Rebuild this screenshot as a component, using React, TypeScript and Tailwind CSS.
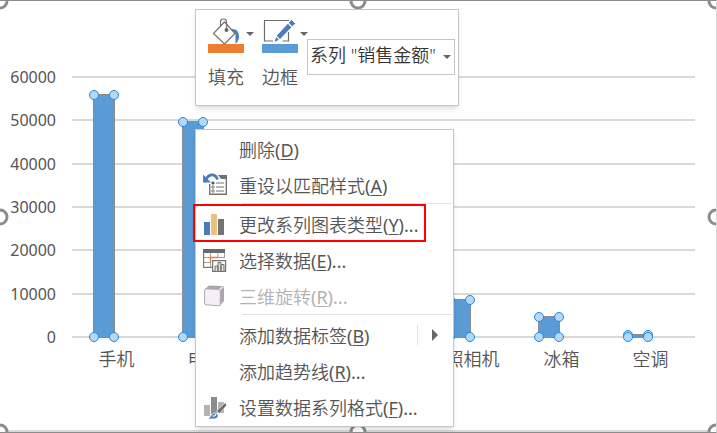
/**
 * App.tsx
 *
 * Sales column chart with its data series selected: the mini toolbar
 * and the series context menu lie open over the plot.
 */

import type { ReactNode } from 'react'

interface Category {
  readonly name: string
  readonly value: number
}

interface MenuEntry {
  readonly label: string
  readonly accessKey: string
  readonly suffix?: string
  readonly icon?: ReactNode
  readonly disabled?: boolean
  readonly highlighted?: boolean
  readonly submenu?: boolean
  readonly separated?: boolean
}

const AXIS_MAX = 60000

const TICKS = [60000, 50000, 40000, 30000, 20000, 10000, 0]

const CATEGORIES: Category[] = [
  { name: '手机', value: 56000 },
  { name: '电脑', value: 50000 },
  { name: '', value: 0 },
  { name: '', value: 0 },
  { name: '照相机', value: 9000 },
  { name: '冰箱', value: 5000 },
  { name: '空调', value: 1000 },
]

const FRAME_HANDLES = [
  'left-0 top-0',
  'left-1/2 top-0',
  'left-full top-0',
  'left-0 top-1/2',
  'left-full top-1/2',
  'left-0 top-full',
  'left-1/2 top-full',
  'left-full top-full',
]

const BAR_HANDLES = ['left-0 top-0', 'left-full top-0', 'left-0 top-full', 'left-full top-full']

function ResetIcon() {
  return (
    <svg viewBox="0 0 24 24" className="h-6 w-6" fill="none">
      <path d="M15 2h9v4h-6z" fill="#737373" />
      <path d="M23.300 4v17.300H6.700V11" stroke="#737373" strokeWidth="1.400" />
      <path d="M13 10h8M13 14h8M13 18h8" stroke="#737373" strokeWidth="1.200" />
      <circle cx="10" cy="10" r="1.600" fill="#555" />
      <circle cx="10" cy="14" r="1.200" stroke="#737373" />
      <circle cx="10" cy="18" r="1.200" stroke="#737373" />
      <path d="M14.500 6.500C12 0 6 1 3 6" stroke="#4a7ebb" strokeWidth="2.800" />
      <path d="M0 1.500V9.500h8z" fill="#4a7ebb" />
    </svg>
  )
}

function ChartTypeIcon() {
  return (
    <svg viewBox="0 0 24 24" className="h-6 w-6">
      <path d="M1 10h6v13H1z" fill="#4a7db3" />
      <path d="M8 2h6v21H8z" fill="#e9c281" />
      <path d="M15 7h6v16h-6z" fill="#737373" />
    </svg>
  )
}

function SelectDataIcon() {
  return (
    <svg viewBox="0 0 24 24" className="h-6 w-6" fill="none">
      <path d="M.600 4v15.400H9M7.500 5v14M15 5v4M0 9.500h22M0 14.500h8M21.500 5v5" stroke="#a0a0a0" />
      <path d="M.600 4v15.400H9" stroke="#737373" />
      <path d="M0 1h22v4H0z" fill="#6b6b6b" />
      <path d="M7.500 14.500v-5H15" stroke="#ed7d31" strokeWidth="1.500" />
      <path d="M9.600 12.600h13v10.800h-13z" fill="#fff" stroke="#737373" strokeWidth="1.200" />
      <path d="M12 23v-5h3v5M15 23v-8.500h3V23M18 23v-6.500h3V23" stroke="#737373" fill="#ddd" />
    </svg>
  )
}

function RotateIcon() {
  return (
    <svg viewBox="0 0 24 24" className="h-6 w-6">
      <path d="M2 5l4-3.500 13 .500q2 0 2 2v13l-4 4.500-1-16z" fill="#a9a9a9" />
      <path
        d="M3 4.800l13 .700q1.300 0 1.300 1.500v13.500q0 1.300-1.500 1.200L3 20.800q-1.400-.200-1.400-1.500V6.300Q1.600 4.800 3 4.800z"
        fill="#f3eff5"
        stroke="#aaa"
      />
      <path d="M16.500 6l3-3" stroke="#eee" strokeWidth="1.500" />
    </svg>
  )
}

function FormatSeriesIcon() {
  return (
    <svg viewBox="0 0 24 24" className="h-6 w-6">
      <path d="M1 10h6v11H1zM15 7h6v11h-6z" fill="#b3b3b3" />
      <path d="M8 2h6v17H8z" fill="#8c8c8c" />
      <path d="M22.500 7.500l1 3-7 8-3-2.500z" fill="#6b6b6b" stroke="#fff" strokeWidth=".600" />
      <path d="M4.500 24c3-1 3-6 7.500-6 4 0 4.500 6-1 6z" fill="#4a7db3" stroke="#fff" strokeWidth=".800" />
      <path d="M9.500 21q3 .500 3.500-2" stroke="#fff" strokeWidth="1.200" fill="none" />
    </svg>
  )
}

function FillIcon() {
  return (
    <svg viewBox="0 0 36 26" className="h-[26px] w-9" fill="none">
      <path d="M16.500 4L5.500 15.500 16.500 26 27 15.500z" fill="#fff" stroke="#737373" strokeWidth="1.200" />
      <path d="M12.500 8V3.500q0-2.500 3-2.500t3 2.500V12" stroke="#737373" strokeWidth="1.200" />
      <circle cx="18.500" cy="12" r="2" fill="#666" />
      <path d="M23 11q8-1 8 7.500 0 4-3.500 7.500v-10z" fill="#4a7ebb" />
    </svg>
  )
}

function OutlineIcon() {
  return (
    <svg viewBox="0 0 36 26" className="h-[26px] w-9" fill="none">
      <path d="M27 2.500H2.500v20.500H11M20.500 23h6v-9" stroke="#6e6e6e" strokeWidth="1.200" />
      <path d="M12 24.500l2-6.500L29.500 1.500l4 4-16 16.500z" fill="#4a7ebb" stroke="#fff" strokeWidth=".800" />
      <path d="M26 5l4.500 4.500M14 18l4 4" stroke="#fff" strokeWidth="1.200" />
    </svg>
  )
}

function CaretDown() {
  return (
    <svg viewBox="0 0 8 4" className="h-1 w-2">
      <path d="M0 0h8L4 4z" fill="#666" />
    </svg>
  )
}

const MENU: MenuEntry[] = [
  { label: '删除', accessKey: 'D' },
  { label: '重设以匹配样式', accessKey: 'A', icon: <ResetIcon /> },
  { label: '更改系列图表类型', accessKey: 'Y', suffix: '...', icon: <ChartTypeIcon />, highlighted: true, separated: true },
  { label: '选择数据', accessKey: 'E', suffix: '...', icon: <SelectDataIcon /> },
  { label: '三维旋转', accessKey: 'R', suffix: '...', icon: <RotateIcon />, disabled: true },
  { label: '添加数据标签', accessKey: 'B', submenu: true, separated: true },
  { label: '添加趋势线', accessKey: 'R', suffix: '...' },
  { label: '设置数据系列格式', accessKey: 'F', suffix: '...', icon: <FormatSeriesIcon /> },
]

function Bar({ value }: { value: number }) {
  return (
    <div
      className="relative ml-[21px] w-[22px] border border-[#8c8c8c] bg-[#5b9bd5]"
      style={{ height: `${(value / AXIS_MAX) * 100}%` }}
    >
      {BAR_HANDLES.map((place) => (
        <span
          key={place}
          className={`absolute h-2.5 w-2.5 -translate-x-1/2 -translate-y-1/2 rounded-full border border-[#1e88e0] bg-[#b5d8f5] ${place}`}
        />
      ))}
    </div>
  )
}

function Chart() {
  return (
    <div className="pt-16 pr-[21px]">
      <div className="flex gap-4">
        <div className="flex h-[284px] w-14 flex-col justify-between text-right text-base/6 font-normal">
          {TICKS.map((tick) => (
            <span key={tick}>{tick}</span>
          ))}
        </div>
        <div className="grid h-[284px] flex-1 grid-rows-1 py-[11px]">
          <div className="col-start-1 row-start-1 flex flex-col justify-between">
            {TICKS.map((tick) => (
              <div key={tick} className="h-0.5 bg-[#d9d9d9]" />
            ))}
          </div>
          <div className="col-start-1 row-start-1 grid grid-cols-7 pt-px">
            {CATEGORIES.map((category, i) => (
              <div key={i} className="flex flex-col justify-end">
                {category.value > 0 && <Bar value={category.value} />}
              </div>
            ))}
          </div>
        </div>
      </div>
      <div className="ml-[72px] grid grid-cols-7 text-center text-lg/5">
        {CATEGORIES.map((category, i) => (
          <span key={i}>{category.name}</span>
        ))}
      </div>
    </div>
  )
}

function ToolButton({ label, icon, swatch }: { label: string; icon: ReactNode; swatch: string }) {
  return (
    <button type="button" className="flex w-[45px] items-start">
      <span className="flex w-9 shrink-0 flex-col">
        {icon}
        <span className={`h-[9px] ${swatch}`} />
        <span className="mt-3 text-lg/6">{label}</span>
      </span>
      <span className="mt-3.5 ml-0.5 flex">
        <CaretDown />
      </span>
    </button>
  )
}

function MiniToolbar() {
  return (
    <div className="absolute top-2 left-[195px] flex h-[97px] w-[264px] items-start border border-[#c6c6c6] bg-white pt-2 pl-3 shadow-md">
      <div className="flex gap-[9px]">
        <ToolButton label="填充" icon={<FillIcon />} swatch="bg-[#ed7d31]" />
        <ToolButton label="边框" icon={<OutlineIcon />} swatch="bg-[#5b9bd5]" />
      </div>
      <div className="mt-[21px] grid w-[148px] items-center">
        <select
          aria-label="图表元素"
          className="col-start-1 row-start-1 h-9 appearance-none border border-[#c6c6c6] bg-white pb-1 pl-0.5 text-lg/6 text-[#333]"
        >
          <option>系列 "销售金额"</option>
        </select>
        <span className="pointer-events-none col-start-1 row-start-1 mr-1 justify-self-end">
          <CaretDown />
        </span>
      </div>
    </div>
  )
}

function MenuRow({ entry }: { entry: MenuEntry }) {
  return (
    <li role="none">
      {entry.separated && <div className="mb-0.5 ml-[46px] h-px bg-[#e1e1e1]" />}
      <button
        type="button"
        role="menuitem"
        disabled={entry.disabled}
        className="relative flex h-9 w-full items-center pl-[7px] text-left text-lg/6 disabled:text-[#b1b1b1]"
      >
        <span className="mr-3 w-6">{entry.icon}</span>
        <span className="flex-1 pt-0.5">
          {entry.label}
          <span className="font-normal">
            (<u className="underline-offset-2">{entry.accessKey}</u>){entry.suffix}
          </span>
        </span>
        {entry.submenu && (
          <span className="mr-3.5 flex h-5 items-center border-l border-[#e1e1e1] pl-3.5">
            <svg viewBox="0 0 6 12" className="h-3 w-1.5">
              <path d="M0 0l6 6-6 6z" fill="#666" />
            </svg>
          </span>
        )}
        {entry.highlighted && (
          <span className="absolute -top-0.5 -left-[3px] h-[38px] w-[233px] border-2 border-[#f00]" />
        )}
      </button>
    </li>
  )
}

function ContextMenu() {
  return (
    <ul
      role="menu"
      className="absolute top-32 left-[195px] w-[259px] border border-[#c6c6c6] bg-white py-px pr-px shadow-md"
    >
      {MENU.map((entry) => (
        <MenuRow key={entry.label} entry={entry} />
      ))}
    </ul>
  )
}

export default function App() {
  return (
    <main className="relative min-h-screen overflow-hidden border-t border-r border-b border-t-[#8c8c8c] border-r-[#d9d9d9] border-b-[#8c8c8c] bg-white font-['Noto_Sans','Noto_Sans_CJK_SC',sans-serif] font-[350] text-[#555] shadow-[inset_0_-2px_0_#d9d9d9]">
      <Chart />
      {FRAME_HANDLES.map((place) => (
        <span
          key={place}
          className={`absolute h-[17px] w-[17px] -translate-x-1/2 -translate-y-1/2 rounded-full border-3 border-[#8c8c8c] bg-white ${place}`}
        />
      ))}
      <MiniToolbar />
      <ContextMenu />
    </main>
  )
}
